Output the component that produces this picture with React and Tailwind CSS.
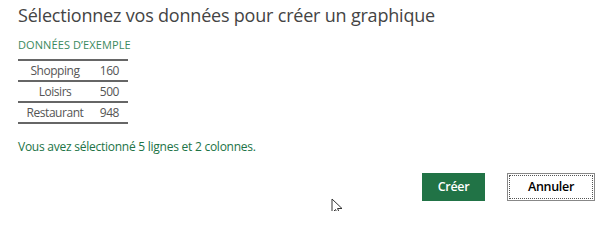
export default function App() {
  const rows = [
    ["Shopping", "160"],
    ["Loisirs", "500"],
    ["Restaurant", "948"],
  ];
  return (
    <div
      className="relative w-[605px] h-[211px] bg-white overflow-hidden"
      style={{ fontFamily: '"Open Sans", sans-serif' }}
    >
      <div className="flex flex-col pl-[18px] pt-[3px]">
        <h1 className="text-[18px] leading-[24px] tracking-[-0.2px] text-[#444]">
          Sélectionnez vos données pour créer un graphique
        </h1>
        <div className="mt-[11px] text-[11px] leading-[14px] tracking-[0.1px] text-[#3b8a5e]">
          DONNÉES D’EXEMPLE
        </div>
        <div className="mt-[7px] w-[110px] border-t-2 border-[#666]">
          {rows.map(([k, v]) => (
            <div
              key={k}
              className="flex h-[21px] items-center border-b-2 border-[#666] text-[12px] tracking-[-0.45px] text-[#555]"
            >
              <span className="w-[74px] text-center">{k}</span>
              <span className="w-[27px] text-right">{v}</span>
            </div>
          ))}
        </div>
        <div className="mt-[15px] text-[12px] leading-[16px] tracking-[-0.25px] text-[#217346]">
          Vous avez sélectionné 5 lignes et 2 colonnes.
        </div>
      </div>
      <div className="absolute left-[422px] top-[173px] flex gap-[22px]">
        <button className="w-[63px] h-[28px] bg-[#217346] text-white font-semibold text-[12.5px] tracking-[-0.3px]">
          Créer
        </button>
        <button className="w-[88px] h-[28px] bg-white border border-[#888] p-[1px]">
          <div className="w-full h-full border border-dotted border-[#555] flex items-center justify-center text-black font-semibold text-[12.5px] tracking-[-0.3px]">
            Annuler
          </div>
        </button>
      </div>
      <svg
        className="absolute left-[331px] top-[198px]"
        width="12"
        height="18"
        viewBox="0 0 12 18"
      >
        <path
          d="M1 1 L1 15 L4.5 11.5 L7 17 L9 16 L6.5 10.5 L11 10.5 Z"
          fill="white"
          stroke="#333"
          strokeWidth="1"
          strokeLinejoin="round"
        />
      </svg>
    </div>
  );
}
